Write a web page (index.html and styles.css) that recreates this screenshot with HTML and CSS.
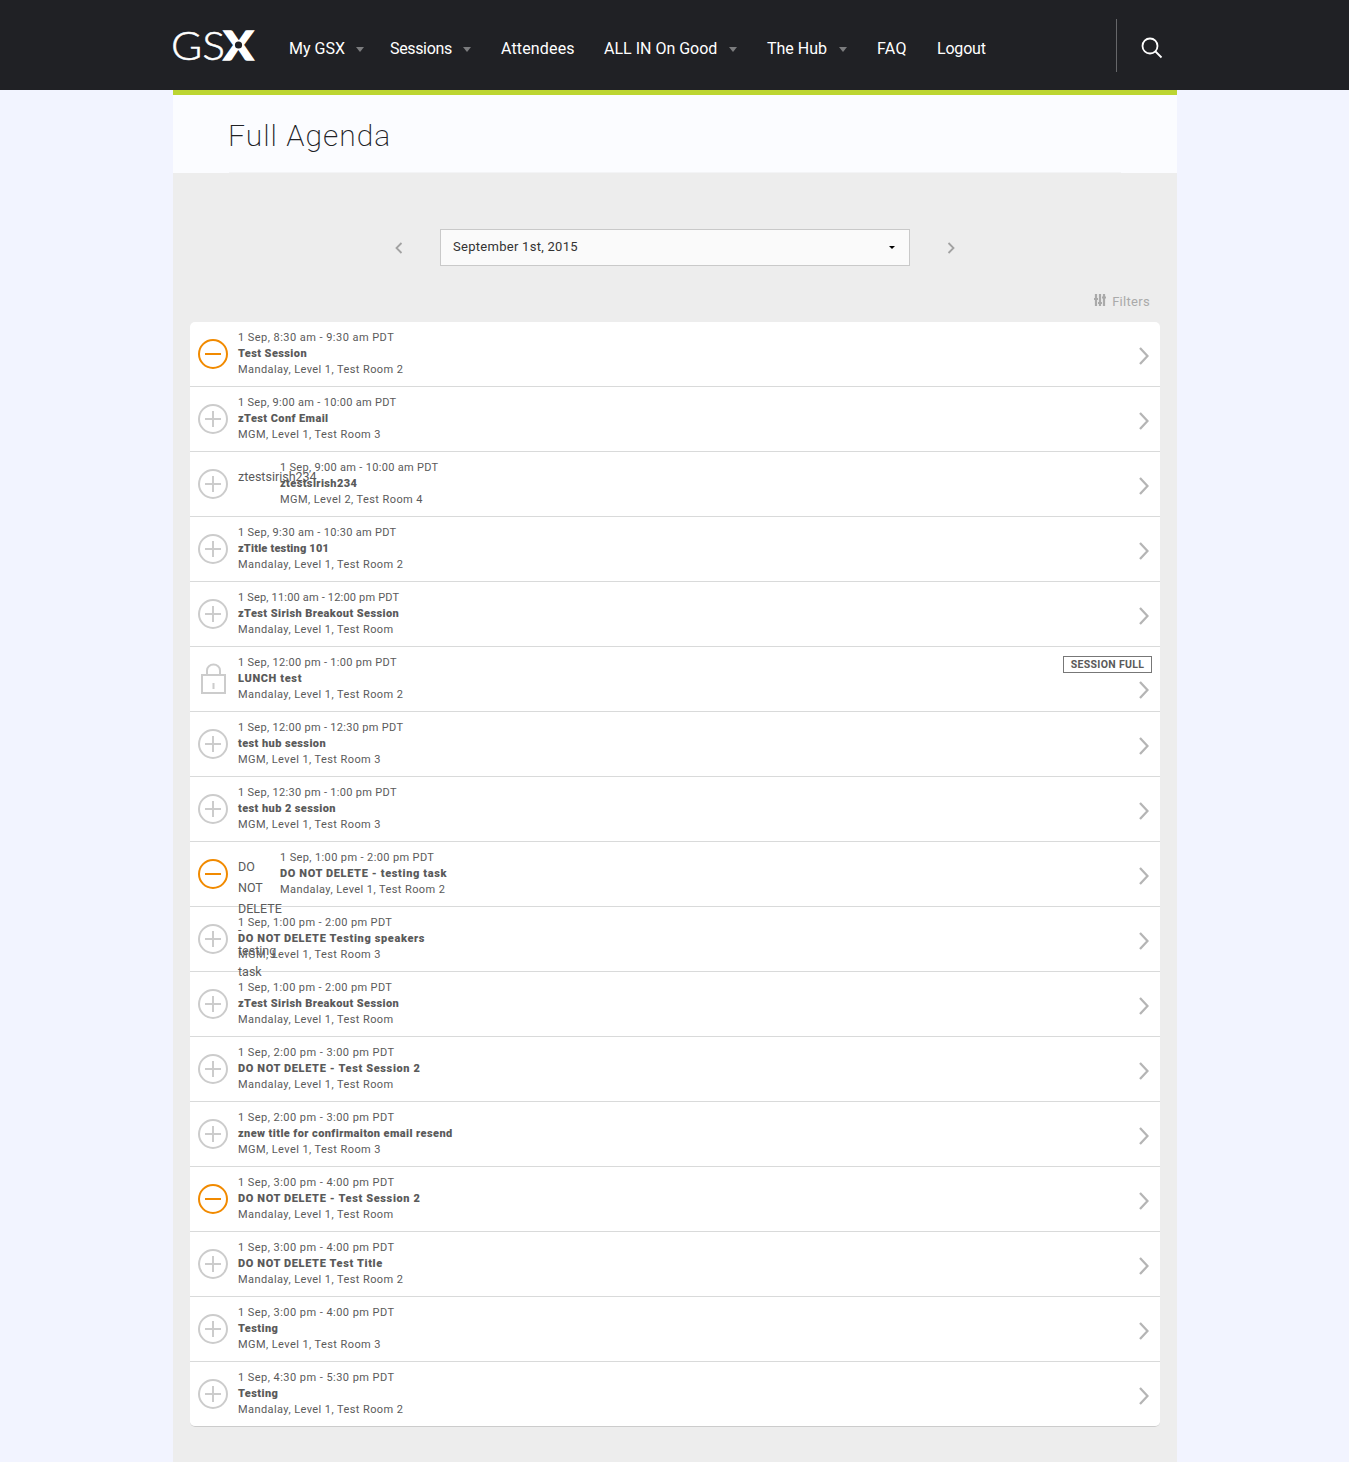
FILE: index.html
```
<!DOCTYPE html>
<html lang="en">
<head>
<meta charset="utf-8">
<title>Full Agenda</title>
<link rel="stylesheet" href="styles.css">
</head>
<body>
<svg class="sprite" aria-hidden="true">
  <symbol id="plus" viewBox="0 0 32 32"><circle cx="16" cy="16" r="14"/><path d="M8 16h16M16 8v16"/></symbol>
  <symbol id="minus" viewBox="0 0 32 32"><circle cx="16" cy="16" r="14"/><path d="M8 16h16"/></symbol>
  <symbol id="lock" viewBox="0 0 32 32"><path d="M5 12h23v18H5zM10 12V7.500a6.500 6 0 0 1 13 0v4.500M16.500 20v6"/></symbol>
  <symbol id="next" viewBox="0 0 10 18"><path d="M1 1l7.500 8L1 17"/></symbol>
</svg>
<header class="topbar">
  <div class="topbar-inner">
    <svg class="logo" viewBox="0 0 82 50" role="img" aria-label="GSX">
      <text class="logo-thin" x="-2" y="38" textLength="54" lengthAdjust="spacingAndGlyphs">GS</text>
      <text class="logo-bold" x="50.500" y="38" textLength="30" lengthAdjust="spacingAndGlyphs">X</text>
      <circle cx="65.500" cy="23" r="3.600"/>
    </svg>
    <nav class="nav">
      <a class="nav-my">My GSX<i class="caret"></i></a>
      <a class="nav-sessions">Sessions<i class="caret"></i></a>
      <a class="nav-attendees">Attendees</a>
      <a class="nav-good">ALL IN On Good<i class="caret"></i></a>
      <a class="nav-hub">The Hub<i class="caret"></i></a>
      <a class="nav-faq">FAQ</a>
      <a class="nav-logout">Logout</a>
    </nav>
    <div class="search"><svg viewBox="0 0 22 22"><circle cx="9" cy="9" r="7.500"/><path d="M14.500 14.500l6 6"/></svg></div>
  </div>
</header>
<main class="page">
  <div class="heading"><h1>Full Agenda</h1></div>
  <div class="datebar">
    <svg class="step" viewBox="0 0 8 12"><path d="M6.500 1L1.500 6l5 5"/></svg>
    <div class="select"><span>September 1st, 2015</span><i></i></div>
    <svg class="step" viewBox="0 0 8 12"><path d="M1.500 1l5 5-5 5"/></svg>
  </div>
  <div class="filters"><svg viewBox="0 0 12 12"><path d="M2 0v12M6 0v12M10 0v12"/><path d="M0 5h4M4 9h4M8 3.500h4"/></svg><span>Filters</span></div>
  <ul class="list">
    <li><svg class="state on"><use href="#minus"/></svg><div class="info"><p>1 Sep, 8:30 am - 9:30 am PDT</p><b>Test Session</b><p class="room">Mandalay, Level 1, Test Room 2</p></div><svg class="go"><use href="#next"/></svg></li>
    <li><svg class="state"><use href="#plus"/></svg><div class="info"><p class="snug">1 Sep, 9:00 am - 10:00 am PDT</p><b>zTest Conf Email</b><p class="room">MGM, Level 1, Test Room 3</p></div><svg class="go"><use href="#next"/></svg></li>
    <li><svg class="state"><use href="#plus"/></svg><span class="alt">ztestsirish234</span><div class="info"><p class="snug">1 Sep, 9:00 am - 10:00 am PDT</p><b>ztestsirish234</b><p class="room">MGM, Level 2, Test Room 4</p></div><svg class="go"><use href="#next"/></svg></li>
    <li><svg class="state"><use href="#plus"/></svg><div class="info"><p class="snug">1 Sep, 9:30 am - 10:30 am PDT</p><b class="tight">zTitle testing 101</b><p class="room">Mandalay, Level 1, Test Room 2</p></div><svg class="go"><use href="#next"/></svg></li>
    <li><svg class="state"><use href="#plus"/></svg><div class="info"><p class="tight">1 Sep, 11:00 am - 12:00 pm PDT</p><b>zTest Sirish Breakout Session</b><p class="room">Mandalay, Level 1, Test Room</p></div><svg class="go"><use href="#next"/></svg></li>
    <li><svg class="state"><use href="#lock"/></svg><div class="info"><p class="snug">1 Sep, 12:00 pm - 1:00 pm PDT</p><b class="caps">LUNCH test</b><p class="room">Mandalay, Level 1, Test Room 2</p></div><div class="full"><span>SESSION FULL</span><svg class="go"><use href="#next"/></svg></div></li>
    <li><svg class="state"><use href="#plus"/></svg><div class="info"><p class="snug">1 Sep, 12:00 pm - 12:30 pm PDT</p><b>test hub session</b><p class="room">MGM, Level 1, Test Room 3</p></div><svg class="go"><use href="#next"/></svg></li>
    <li><svg class="state"><use href="#plus"/></svg><div class="info"><p class="snug">1 Sep, 12:30 pm - 1:00 pm PDT</p><b>test hub 2 session</b><p class="room">MGM, Level 1, Test Room 3</p></div><svg class="go"><use href="#next"/></svg></li>
    <li><svg class="state on"><use href="#minus"/></svg><span class="alt">DO NOT DELETE - testing task</span><div class="info"><p class="even">1 Sep, 1:00 pm - 2:00 pm PDT</p><b class="caps">DO NOT DELETE - testing task</b><p class="room">Mandalay, Level 1, Test Room 2</p></div><svg class="go"><use href="#next"/></svg></li>
    <li><svg class="state"><use href="#plus"/></svg><div class="info"><p class="even">1 Sep, 1:00 pm - 2:00 pm PDT</p><b class="caps">DO NOT DELETE Testing speakers</b><p class="room">MGM, Level 1, Test Room 3</p></div><svg class="go"><use href="#next"/></svg></li>
    <li><svg class="state"><use href="#plus"/></svg><div class="info"><p class="even">1 Sep, 1:00 pm - 2:00 pm PDT</p><b>zTest Sirish Breakout Session</b><p class="room">Mandalay, Level 1, Test Room</p></div><svg class="go"><use href="#next"/></svg></li>
    <li><svg class="state"><use href="#plus"/></svg><div class="info"><p>1 Sep, 2:00 pm - 3:00 pm PDT</p><b class="caps">DO NOT DELETE - Test Session 2</b><p class="room">Mandalay, Level 1, Test Room</p></div><svg class="go"><use href="#next"/></svg></li>
    <li><svg class="state"><use href="#plus"/></svg><div class="info"><p>1 Sep, 2:00 pm - 3:00 pm PDT</p><b>znew title for confirmaiton email resend</b><p class="room">MGM, Level 1, Test Room 3</p></div><svg class="go"><use href="#next"/></svg></li>
    <li><svg class="state on"><use href="#minus"/></svg><div class="info"><p>1 Sep, 3:00 pm - 4:00 pm PDT</p><b class="caps">DO NOT DELETE - Test Session 2</b><p class="room">Mandalay, Level 1, Test Room</p></div><svg class="go"><use href="#next"/></svg></li>
    <li><svg class="state"><use href="#plus"/></svg><div class="info"><p>1 Sep, 3:00 pm - 4:00 pm PDT</p><b class="caps">DO NOT DELETE Test Title</b><p class="room">Mandalay, Level 1, Test Room 2</p></div><svg class="go"><use href="#next"/></svg></li>
    <li><svg class="state"><use href="#plus"/></svg><div class="info"><p>1 Sep, 3:00 pm - 4:00 pm PDT</p><b>Testing</b><p class="room">MGM, Level 1, Test Room 3</p></div><svg class="go"><use href="#next"/></svg></li>
    <li><svg class="state"><use href="#plus"/></svg><div class="info"><p>1 Sep, 4:30 pm - 5:30 pm PDT</p><b>Testing</b><p class="room">Mandalay, Level 1, Test Room 2</p></div><svg class="go"><use href="#next"/></svg></li>
  </ul>
</main>
</body>
</html>
```
FILE: styles.css
```
* { box-sizing: border-box; }
body { margin: 0; background: #f2f4ff; font-family: Roboto, "Open Sans", sans-serif; color: #5a5a5a; }
h1, p, ul { margin: 0; padding: 0; }
svg { display: block; fill: none; stroke: currentColor; flex: none; }
.sprite { position: absolute; width: 0; height: 0; }

.topbar { height: 90px; background: #202125; color: #fff; }
.topbar-inner { width: 1004px; height: 90px; margin-left: 173px; display: flex; align-items: flex-start; }
.logo { width: 82px; height: 50px; margin-top: 22px; overflow: visible; }
.logo text { fill: #fff; stroke: #fff; stroke-width: .5; }
.logo-thin { font: 300 40px Lato, sans-serif; }
.logo .logo-bold { font: 900 40px Lato, sans-serif; stroke-width: 1.4; }
.logo circle { fill: #202125; stroke: none; }
.nav { display: flex; margin: 37px 0 0 34px; font-size: 16px; line-height: 24px; white-space: nowrap; }
.nav a { display: flex; align-items: center; justify-content: space-between; }
.nav-my { width: 75px; margin-right: 26px; }
.nav-sessions { width: 81px; margin-right: 30px; letter-spacing: -.35px; }
.nav-attendees { width: 73px; margin-right: 30px; letter-spacing: .15px; }
.nav-good { width: 133px; margin-right: 30px; }
.nav-hub { width: 80px; margin-right: 30px; }
.nav-faq { width: 30px; margin-right: 30px; letter-spacing: .3px; }
.nav-logout { width: 49px; letter-spacing: -.2px; }
.caret { border: 4.5px solid transparent; border-top: 5px solid #7b7c7e; border-bottom: 0; }
.search { width: 61px; height: 53px; margin: 19px 0 0 auto; padding: 18px 0 0 24px; border-left: 1px solid #66676a; }
.search svg { width: 22px; height: 22px; stroke-width: 1.8; }

.page { width: 1004px; height: 1372px; margin-left: 173px; background: #ededed; border-top: 5px solid #bcd531; }
.heading { height: 78px; padding: 0 56px; background: #fbfcff; }
h1 { height: 78px; border-bottom: 1px solid #f3f4f6; font-size: 30px; line-height: 82px; font-weight: 200; letter-spacing: 1px; text-indent: -1px; color: #202125; }
.datebar { display: flex; align-items: center; justify-content: center; gap: 37px; margin-top: 56px; }
.step { width: 8px; height: 12px; margin-top: 1px; color: #a2a2a2; stroke-width: 1.8; }
.select { display: flex; align-items: center; justify-content: space-between; width: 470px; height: 37px; padding: 0 14px 2px 12px; border: 1px solid #c9c9c9; background: #fafafa; font-size: 13px; letter-spacing: .28px; color: #333; }
.select i { border: 3px solid transparent; border-top: 3px solid #000; border-bottom: 0; margin-top: 1px; }
.filters { display: flex; justify-content: flex-end; gap: 6px; height: 20px; margin: 26px 27px 10px 0; font-size: 13px; line-height: 20px; letter-spacing: .3px; color: #aaa; }
.filters svg { width: 12px; height: 12px; margin-top: 2px; stroke-width: 2.2; }

.list { width: 970px; margin-left: 17px; list-style: none; background: #fff; border-radius: 5px; }
.list li { display: flex; align-items: flex-start; height: 65px; padding: 7px 11px 0 7px; border-bottom: 1px solid #d9dada; }
.list li:last-child { border-color: #ccc; border-radius: 0 0 5px 5px; }
.state { width: 32px; height: 32px; margin: 9px 9px 0 0; color: #ccc; stroke-width: 2; }
.state.on { color: #f18a00; }
.alt { width: 42px; margin-top: 7px; font-size: 12.5px; line-height: 21px; }
.info { margin-top: 1px; font-size: 11px; line-height: 16px; letter-spacing: .46px; white-space: nowrap; }
.info b { display: block; font-weight: 900; letter-spacing: .4px; }
.info .even { letter-spacing: .38px; }
.info .snug { letter-spacing: .31px; }
.info .tight { letter-spacing: .18px; }
.info .caps { letter-spacing: .63px; }
.info .room { letter-spacing: .42px; }
.go { width: 10px; height: 18px; margin: 18px 0 0 auto; color: #b5b5b5; stroke-width: 2.3; }
.full { width: 89px; margin: 2px -3px 0 auto; }
.full span { display: block; height: 17px; border: 1px solid #777; font-size: 10.5px; line-height: 16px; font-weight: 700; letter-spacing: .3px; text-align: center; }
.full .go { margin: 8px 3px 0 auto; }
```
